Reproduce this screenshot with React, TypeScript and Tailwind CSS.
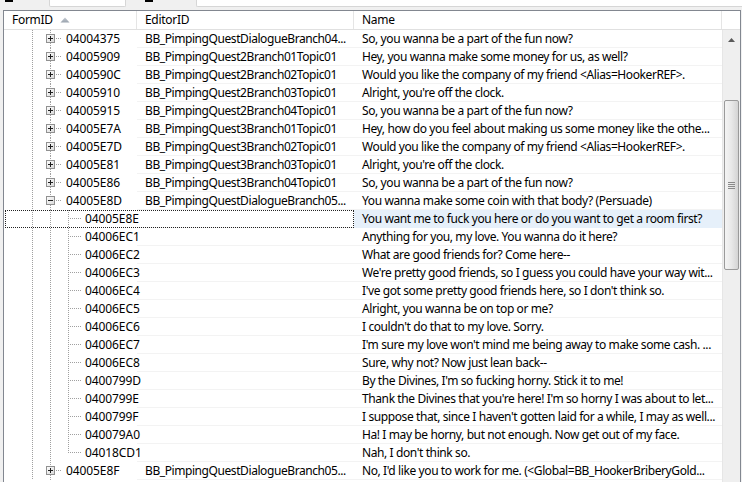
import React from "react";

type Kind = "plus" | "minus" | "child" | "last";

interface Row {
  id: string;
  editor: string;
  name: string;
  kind: Kind;
  selected?: boolean;
}

const rows: Row[] = [
  { id: "04004375", editor: "BB_PimpingQuestDialogueBranch04...", name: "So, you wanna be a part of the fun now?", kind: "plus" },
  { id: "04005909", editor: "BB_PimpingQuest2Branch01Topic01", name: "Hey, you wanna make some money for us, as well?", kind: "plus" },
  { id: "0400590C", editor: "BB_PimpingQuest2Branch02Topic01", name: "Would you like the company of my friend <Alias=HookerREF>.", kind: "plus" },
  { id: "04005910", editor: "BB_PimpingQuest2Branch03Topic01", name: "Alright, you're off the clock.", kind: "plus" },
  { id: "04005915", editor: "BB_PimpingQuest2Branch04Topic01", name: "So, you wanna be a part of the fun now?", kind: "plus" },
  { id: "04005E7A", editor: "BB_PimpingQuest3Branch01Topic01", name: "Hey, how do you feel about making us some money like the othe...", kind: "plus" },
  { id: "04005E7D", editor: "BB_PimpingQuest3Branch02Topic01", name: "Would you like the company of my friend <Alias=HookerREF>.", kind: "plus" },
  { id: "04005E81", editor: "BB_PimpingQuest3Branch03Topic01", name: "Alright, you're off the clock.", kind: "plus" },
  { id: "04005E86", editor: "BB_PimpingQuest3Branch04Topic01", name: "So, you wanna be a part of the fun now?", kind: "plus" },
  { id: "04005E8D", editor: "BB_PimpingQuestDialogueBranch05...", name: "You wanna make some coin with that body? (Persuade)", kind: "minus" },
  { id: "04005E8E", editor: "", name: "You want me to fuck you here or do you want to get a room first?", kind: "child", selected: true },
  { id: "04006EC1", editor: "", name: "Anything for you, my love. You wanna do it here?", kind: "child" },
  { id: "04006EC2", editor: "", name: "What are good friends for? Come here--", kind: "child" },
  { id: "04006EC3", editor: "", name: "We're pretty good friends, so I guess you could have your way wit...", kind: "child" },
  { id: "04006EC4", editor: "", name: "I've got some pretty good friends here, so I don't think so.", kind: "child" },
  { id: "04006EC5", editor: "", name: "Alright, you wanna be on top or me?", kind: "child" },
  { id: "04006EC6", editor: "", name: "I couldn't do that to my love. Sorry.", kind: "child" },
  { id: "04006EC7", editor: "", name: "I'm sure my love won't mind me being away to make some cash. ...", kind: "child" },
  { id: "04006EC8", editor: "", name: "Sure, why not? Now just lean back--", kind: "child" },
  { id: "0400799D", editor: "", name: "By the Divines, I'm so fucking horny. Stick it to me!", kind: "child" },
  { id: "0400799E", editor: "", name: "Thank the Divines that you're here! I'm so horny I was about to let...", kind: "child" },
  { id: "0400799F", editor: "", name: "I suppose that, since I haven't gotten laid for a while, I may as well...", kind: "child" },
  { id: "040079A0", editor: "", name: "Ha! I may be horny, but not enough. Now get out of my face.", kind: "child" },
  { id: "04018CD1", editor: "", name: "Nah, I don't think so.", kind: "last" },
  { id: "04005E8F", editor: "BB_PimpingQuestDialogueBranch05...", name: "No, I'd like you to work for me. (<Global=BB_HookerBriberyGold...", kind: "plus" },
];

const LINE = "#a0a0a0";

// Dotted tree connectors and the expand/collapse box for one row.
function TreeLines({ kind }: { kind: Kind }) {
  const dot = { stroke: LINE, strokeWidth: 1, strokeDasharray: "1 1", shapeRendering: "crispEdges" as const };
  const isParent = kind === "plus" || kind === "minus";
  return (
    <svg width="133" height="18" className="absolute left-0 top-0">
      {/* outer level connector */}
      <line x1="28.5" y1="0" x2="28.5" y2="18" {...dot} />
      {/* sibling connector */}
      {isParent ? (
        <>
          <line x1="46.5" y1="0" x2="46.5" y2="4" {...dot} />
          <line x1="46.5" y1="13" x2="46.5" y2="18" {...dot} />
          <line x1="52" y1="8.5" x2="58" y2="8.5" {...dot} />
        </>
      ) : (
        <line x1="46.5" y1="0" x2="46.5" y2="18" {...dot} />
      )}
      {!isParent && (
        <>
          <line x1="64.5" y1="0" x2="64.5" y2={kind === "last" ? 9 : 18} {...dot} />
          <line x1="66" y1="8.5" x2="77" y2="8.5" {...dot} />
        </>
      )}
      {isParent && (
        <>
          <defs>
            <linearGradient id={`box-${kind}`} x1="0" y1="0" x2="1" y2="1">
              <stop offset="0" stopColor="#ffffff" />
              <stop offset="1" stopColor="#d8d8d8" />
            </linearGradient>
          </defs>
          <rect x="42.5" y="4.5" width="8" height="8" fill={`url(#box-${kind})`} stroke="#919191" shapeRendering="crispEdges" />
          <line x1="44" y1="8.5" x2="49" y2="8.5" stroke="#1e1e1e" shapeRendering="crispEdges" />
          {kind === "plus" && <line x1="46.5" y1="6" x2="46.5" y2="11" stroke="#1e1e1e" shapeRendering="crispEdges" />}
        </>
      )}
    </svg>
  );
}

function SortArrow() {
  return (
    <svg width="10" height="6" className="ml-[7px] mt-[-1px]">
      <defs>
        <linearGradient id="sortg" x1="0" y1="0" x2="0" y2="1">
          <stop offset="0" stopColor="#c4cad2" />
          <stop offset="1" stopColor="#9aa3ae" />
        </linearGradient>
      </defs>
      <path d="M5 0.5 L9.5 5.5 L0.5 5.5 Z" fill="url(#sortg)" />
    </svg>
  );
}

function ScrollBar() {
  return (
    <div className="flex h-full w-[18px] shrink-0 flex-col border-l border-[#e6e6e6] bg-[#efefef]">
      <div className="flex h-[19px] shrink-0 items-center justify-center">
        <svg width="7" height="4">
          <path d="M3.5 0 L7 4 L0 4 Z" fill="#5a5a5a" />
        </svg>
      </div>
      <div className="h-[51px] shrink-0" />
      <div className="mx-[1px] flex h-[170px] shrink-0 items-center justify-center rounded-[2px] border border-[#9a9a9a] bg-gradient-to-r from-[#f4f4f4] via-[#e8e8e8] to-[#d4d4d4]">
        <div className="flex flex-col gap-[1px]">
          <div className="h-[1px] w-[7px] bg-[#8a8a8a]" />
          <div className="h-[1px] w-[7px] bg-[#8a8a8a]" />
          <div className="h-[1px] w-[7px] bg-[#8a8a8a]" />
          <div className="h-[1px] w-[7px] bg-[#8a8a8a]" />
        </div>
      </div>
      <div className="flex-1" />
    </div>
  );
}

function TreeRow({ row }: { row: Row }) {
  const level1 = row.kind === "plus" || row.kind === "minus";
  return (
    <div className="relative flex h-[18px] shrink-0">
      <div className="relative h-[18px] w-[133px] shrink-0">
        <TreeLines kind={row.kind} />
        <span className={`absolute top-0 leading-[17px] tracking-[-0.1px] ${level1 ? "left-[62px]" : "left-[81px]"}`}>
          {row.id}
        </span>
      </div>
      <div className="h-[18px] w-[217px] shrink-0 overflow-hidden whitespace-nowrap border-b border-[#f3f3f3] pl-[8px] leading-[17px] tracking-[-0.42px]">
        {row.editor}
      </div>
      <div
        className={`h-[18px] w-[368px] shrink-0 overflow-hidden whitespace-nowrap border-b pl-[8px] leading-[17px] tracking-[-0.4px] ${
          row.selected ? "border-[#e6f0fa] bg-[#e6f0fa]" : "border-[#f3f3f3]"
        }`}
      >
        {row.name}
      </div>
      {row.selected && (
        <div className="pointer-events-none absolute left-[1px] top-0 h-[18px] w-[349px] border border-dotted border-[#222]" />
      )}
    </div>
  );
}

export default function App() {
  return (
    <div
      className="flex h-[482px] w-[742px] flex-col overflow-hidden bg-[#f0f0f0] text-[12px] text-black"
      style={{ fontFamily: '"Noto Sans", "Open Sans", sans-serif' }}
    >
      {/* tab strip */}
      <div className="flex h-[10px] shrink-0">
        <div className="relative w-[49px] shrink-0">
          <div className="absolute left-[5px] top-0 h-[2px] w-[8px] bg-black" />
        </div>
        <div className="h-[7px] w-[77px] shrink-0 rounded-b-[2px] border-x border-b border-[#d6d6d6] bg-white" />
        <div className="relative w-[70px] shrink-0">
          <div className="absolute left-[19px] top-0 h-[2px] w-[8px] bg-black" />
        </div>
        <div className="h-[7px] flex-1 rounded-bl-[2px] border-b border-l border-[#d6d6d6] bg-white" />
      </div>

      {/* tree list */}
      <div className="ml-[3px] flex min-h-0 w-[738px] flex-1 flex-col border-l border-r border-t border-[#828790] bg-white">
        <div className="flex h-[19px] shrink-0 border-b border-[#e0e0e0] bg-white leading-[18px] tracking-[-0.3px]">
          <div className="flex w-[133px] shrink-0 items-center border-r border-[#e5e5e5] pl-[8px]">
            <span>FormID</span>
            <SortArrow />
          </div>
          <div className="w-[217px] shrink-0 border-r border-[#e5e5e5] pl-[8px]">EditorID</div>
          <div className="w-[368px] shrink-0 border-r border-[#e5e5e5] pl-[8px]">Name</div>
          <div className="flex-1" />
        </div>
        <div className="flex min-h-0 flex-1">
          <div className="flex w-[718px] shrink-0 flex-col">
            {rows.map((r) => (
              <TreeRow key={r.id} row={r} />
            ))}
          </div>
          <ScrollBar />
        </div>
      </div>
    </div>
  );
}
